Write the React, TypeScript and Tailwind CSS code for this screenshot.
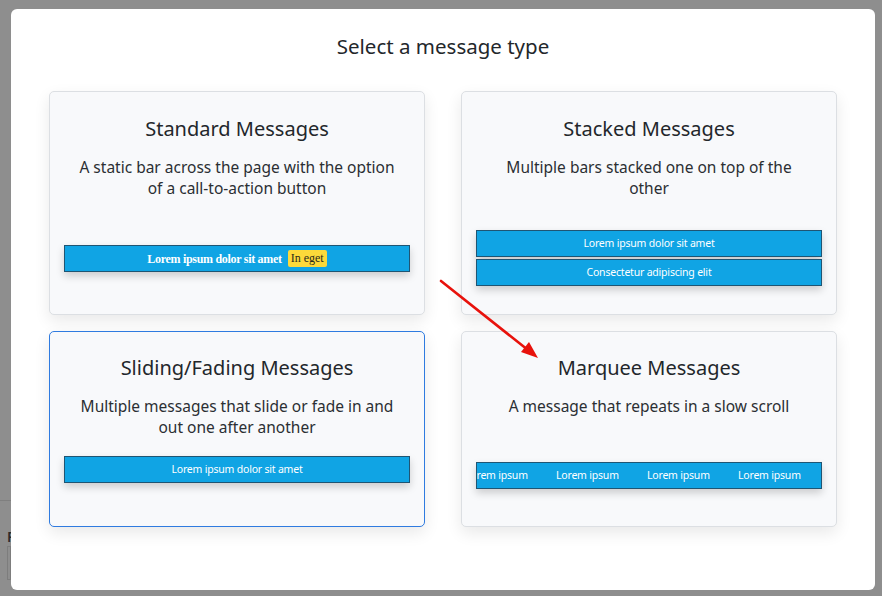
import React from 'react';

const sans = { fontFamily: '"Noto Sans", "Open Sans", sans-serif' };

const Bar: React.FC<{ children: React.ReactNode; className?: string }> = ({ children, className }) => (
  <div
    className={
      'flex h-[27px] items-center justify-center border border-[#1f5573] bg-[#10a4e4] text-white shadow-[0_4px_8px_rgba(0,0,0,0.18)] ' +
      (className || '')
    }
  >
    {children}
  </div>
);

const Card: React.FC<{
  title: string;
  desc: React.ReactNode;
  active?: boolean;
  className: string;
  children: React.ReactNode;
}> = ({ title, desc, active, className, children }) => (
  <div
    className={
      'rounded-[5px] border bg-[#f8f9fb] px-[14px] shadow-[0_6px_16px_rgba(0,0,0,0.09)] ' +
      (active ? 'border-[#2f7be0] ' : 'border-[#dcdfe3] ') +
      className
    }
  >
    <h2 className="text-center text-[20px] leading-[28px] text-[#23272b]">{title}</h2>
    <p className="mt-[14px] text-center text-[15.5px] leading-[21px] text-[#2b2f33]">{desc}</p>
    {children}
  </div>
);

export default function App() {
  return (
    <div className="relative h-[596px] w-[882px] overflow-hidden bg-[#8e8e8e]" style={sans}>
      {/* faint page behind the overlay */}
      <div className="absolute left-0 top-[500px] h-px w-[11px] bg-[#7f7f7f]" />
      <div className="absolute left-[7px] top-[526px] text-[14px] font-semibold text-[#2a2a2a]">F</div>
      <div className="absolute left-[7px] top-[546px] h-[34px] w-[4px] border border-[#7d7d7d]" />

      <div className="relative ml-[11px] mt-[9px] h-[581px] w-[864px] rounded-[6px] bg-white">
        <h1 className="pt-[23px] text-center text-[20.5px] leading-[28px] text-[#23272b]">Select a message type</h1>

        <div className="mx-[38px] mt-[31px] grid grid-cols-2 gap-x-[36px] gap-y-[16px]">
          <Card
            className="h-[224px] pt-[23px]"
            title="Standard Messages"
            desc={<>A static bar across the page with the option<br />of a call-to-action button</>}
          >
            <Bar className="mt-[46px]">
              <span className="font-bold text-[12px] tracking-[-0.3px]" style={{ fontFamily: '"Liberation Serif", serif' }}>
                Lorem ipsum dolor sit amet
              </span>
              <span
                className="ml-[6px] rounded-[2px] bg-[#fcd93a] px-[3px] text-[12px] leading-[17px] text-[#2a2a1a]"
                style={{ fontFamily: '"Liberation Serif", serif' }}
              >
                In eget
              </span>
            </Bar>
          </Card>
          <Card
            className="h-[224px] pt-[23px]"
            title="Stacked Messages"
            desc={<>Multiple bars stacked one on top of the<br />other</>}
          >
            <div className="mt-[31px] flex flex-col gap-[2px]">
              <Bar>
                <span className="text-[10.5px] tracking-[-0.2px]">Lorem ipsum dolor sit amet</span>
              </Bar>
              <Bar>
                <span className="text-[10.5px] tracking-[-0.2px]">Consectetur adipiscing elit</span>
              </Bar>
            </div>
          </Card>
          <Card
            active
            className="h-[196px] pt-[22px]"
            title="Sliding/Fading Messages"
            desc={<>Multiple messages that slide or fade in and<br />out one after another</>}
          >
            <Bar className="mt-[18px]">
              <span className="text-[10.5px] tracking-[-0.2px]">Lorem ipsum dolor sit amet</span>
            </Bar>
          </Card>
          <Card className="h-[196px] pt-[22px]" title="Marquee Messages" desc="A message that repeats in a slow scroll">
            <div className="mt-[45px] flex h-[27px] items-center overflow-hidden border border-[#1f5573] bg-[#10a4e4] text-white shadow-[0_4px_8px_rgba(0,0,0,0.18)]">
              <div className="-ml-[12px] flex gap-[29px] whitespace-nowrap text-[10.5px] tracking-[-0.2px]">
                <span className="w-[62px]">Lorem ipsum</span>
                <span className="w-[62px]">Lorem ipsum</span>
                <span className="w-[62px]">Lorem ipsum</span>
                <span className="w-[62px]">Lorem ipsum</span>
              </div>
            </div>
          </Card>
        </div>
      </div>

      {/* annotation arrow */}
      <svg className="absolute left-0 top-0" width="882" height="596" viewBox="0 0 882 596">
        <line x1="441" y1="281" x2="528" y2="350" stroke="#e8120c" strokeWidth="2.6" strokeLinecap="round" />
        <polygon points="538,358 521,352 529,342" fill="#e8120c" />
      </svg>
    </div>
  );
}
